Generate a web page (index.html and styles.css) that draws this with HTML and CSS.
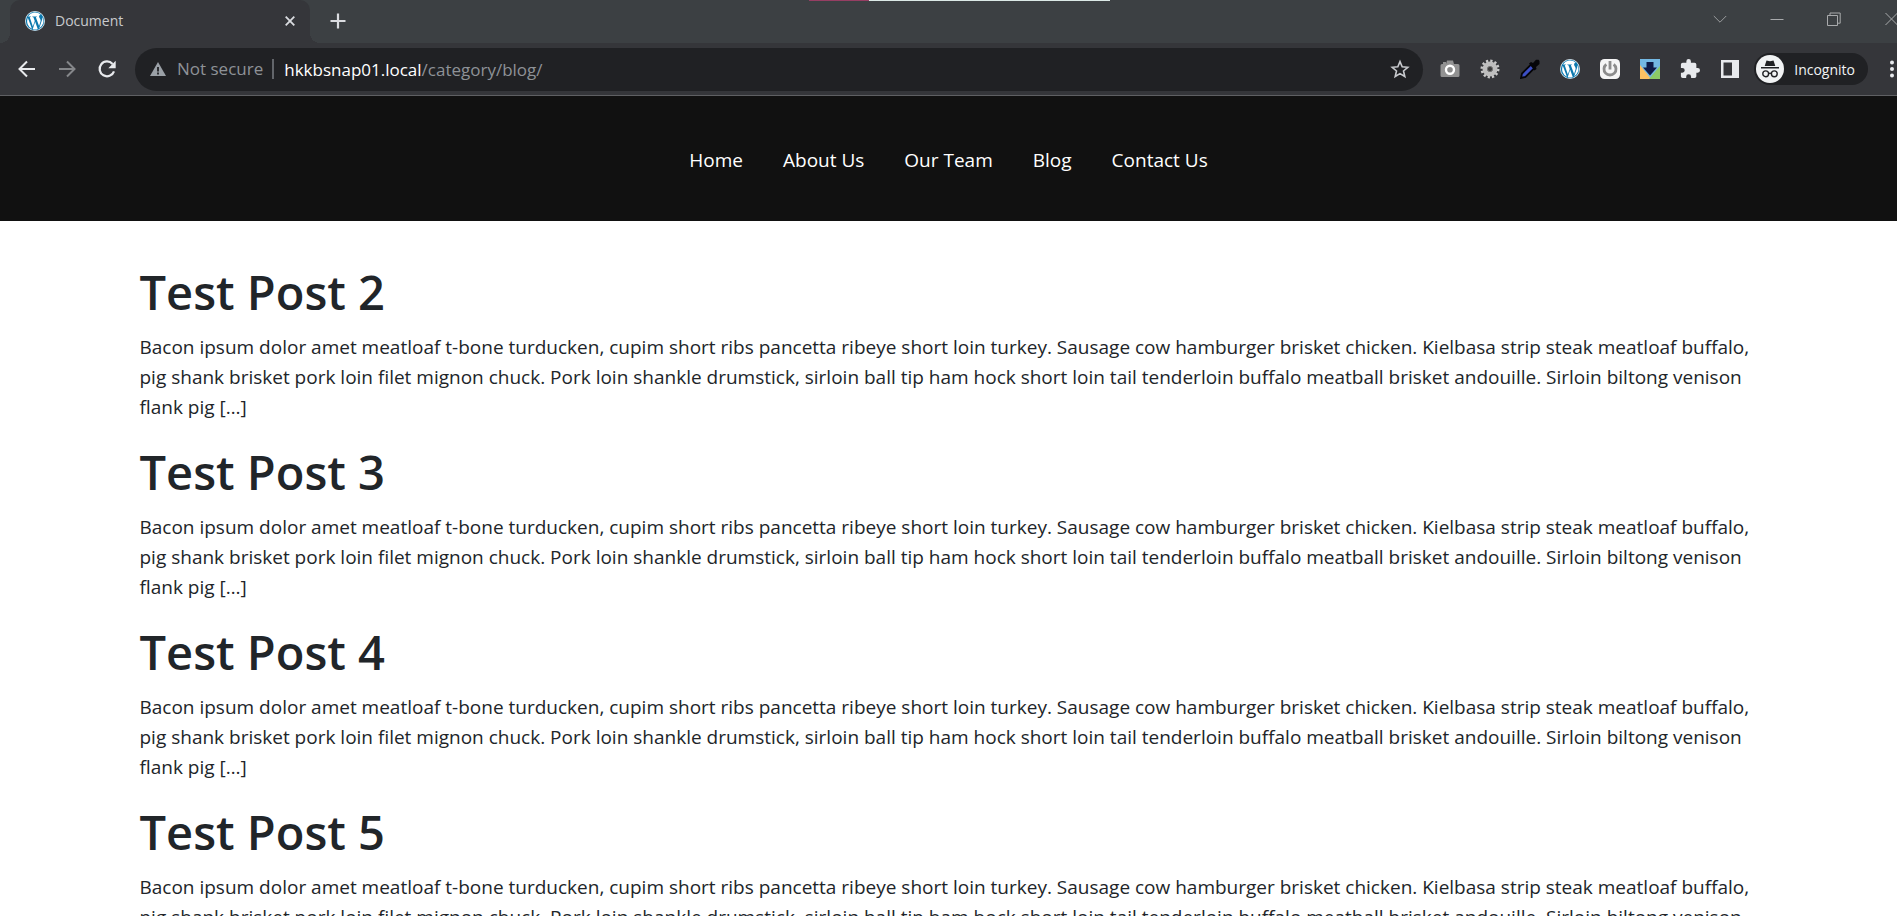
FILE: index.html
```html
<!DOCTYPE html>
<html lang="en">
<head>
<meta charset="utf-8">
<title>Document</title>
<link rel="stylesheet" href="styles.css">
</head>
<body>
<svg class="defs" aria-hidden="true">
  <symbol id="wp" viewBox="0 0 24 24">
    <circle cx="12" cy="12" r="12" fill="#dcecf4"/>
    <circle cx="12" cy="12" r="11" fill="#0b78ae"/>
    <path fill="#fff" d="M3.4 8.2 8.3 21.4A10.2 10.2 0 0 1 3.4 8.2zM12.2 12.8l3.2 9a10.200 10.200 0 0 1-6.200.1zM20.900 7.200A10.200 10.200 0 0 1 17 20.900l3.100-9.100c.6-1.500.9-3 .8-4.600zM3.500 6.500A10.200 10.200 0 0 1 18.900 4.400c-1.300 0-2 1-2 2.200 0 1 .7 1.900 1.300 3 .5.8.7 1.700.4 3l-1.700 5.500L13 7.400l1.200-.2V6.500H8.800v.7l1.300.2 1.600 4.500-2.300 6.800L5.700 7.400 7 7.200v-.7z"/>
  </symbol>
</svg>
<div class="window">
  <div class="tabstrip">
    <span class="capture"><i class="capture-done"></i><i class="capture-rest"></i></span>
    <div class="tab">
      <svg class="i20"><use href="#wp"/></svg>
      <span class="tab-title">Document</span>
      <button class="tab-close" aria-label="Close tab"><svg class="i10" viewBox="0 0 10 10"><path d="M.7.7l8.600 8.600M9.300.7.7 9.300" stroke="#dadce0" stroke-width="1.800"/></svg></button>
    </div>
    <button class="new-tab" aria-label="New tab"><svg class="i16" viewBox="0 0 16 16"><path d="M8 .5v15M.5 8h15" stroke="#dadce0" stroke-width="2.200"/></svg></button>
    <div class="controls">
      <button aria-label="Search tabs"><svg class="i14" viewBox="0 0 14 14"><path d="M.8 4 7 10.200 13.200 4" fill="none" stroke="#9a9c9e"/></svg></button>
      <button aria-label="Minimize"><svg class="i14" viewBox="0 0 14 14"><path d="M.5 7.500h13" stroke="#a8aaac"/></svg></button>
      <button aria-label="Restore"><svg class="i14" viewBox="0 0 14 14"><path d="M.5 3.500h10v10h-10zM3 3V1h10.200v10.200H11" fill="none" stroke="#a8aaac"/></svg></button>
      <button class="win-close" aria-label="Close"><svg class="close-icon" viewBox="0 0 12 14"><path d="M.5 1l12 12M12.500 1l-12 12" stroke="#a8aaac"/></svg></button>
    </div>
  </div>
  <div class="toolbar">
    <div class="history">
      <button aria-label="Back"><svg class="i20" viewBox="0 0 20 20"><path d="M18 10H3M10 2.500 2.500 10l7.500 7.500" fill="none" stroke="#e8eaed" stroke-width="2"/></svg></button>
      <button aria-label="Forward"><svg class="i20" viewBox="0 0 20 20"><path d="M2 10H17M10 2.500l7.500 7.500-7.500 7.500" fill="none" stroke="#85878a" stroke-width="2"/></svg></button>
      <button aria-label="Reload"><svg class="i20" viewBox="0 0 20 20"><path d="M17 12.300A7.400 7.400 0 1 1 15.600 5" fill="none" stroke="#e8eaed" stroke-width="2.200"/><path d="M18.700 1.800v7.400h-7.400z" fill="#e8eaed"/></svg></button>
    </div>
    <div class="omnibox">
      <svg class="i16 warn" viewBox="0 0 16 16"><path d="M8 1l8 14H0z" fill="#9aa0a6"/><path d="M8 6v4.500M8 11.500v2" stroke="#202124" stroke-width="1.800"/></svg>
      <span class="secure">Not secure</span>
      <span class="url"><span class="host">hkkbsnap01.local</span>/category/blog/</span>
      <button class="star" aria-label="Bookmark this page"><svg class="i20" viewBox="0 0 20 20"><path d="M10 2.600l2.200 5.200 5.600.5-4.300 3.700 1.300 5.500L10 14.600l-4.800 2.900L6.500 12 2.200 8.300l5.600-.5z" fill="none" stroke="#c8cace" stroke-width="1.600"/></svg></button>
    </div>
    <div class="extensions">
      <button aria-label="Screenshot"><svg class="i20" viewBox="0 0 20 20"><path d="M3 3h3v2H3zM7 1.500h6l1 3.500h4a1.500 1.500 0 0 1 1.500 1.500v10A1.500 1.500 0 0 1 18 18H2a1.500 1.500 0 0 1-1.500-1.500v-10A1.500 1.500 0 0 1 2 5h4z" fill="#929292"/><circle cx="10" cy="10.800" r="4" fill="#8a8a8a" stroke="#fff" stroke-width="2.400"/></svg></button>
      <button aria-label="Settings extension"><svg class="i20" viewBox="0 0 20 20"><circle cx="10" cy="10" r="8" fill="none" stroke="#c9c9c9" stroke-width="3" stroke-dasharray="2.200 1.990"/><circle cx="10" cy="10" r="5" fill="none" stroke="#bebebe" stroke-width="5"/><circle cx="10" cy="10" r="2.600" fill="#3c3c3c" stroke="#777"/></svg></button>
      <button aria-label="Color picker"><svg class="i20" viewBox="0 0 20 20"><path d="M1 19l1-4.500L11 5.500l3.500 3.500-9 9z" fill="#3c4fc4" stroke="#050508" stroke-width="1.800"/><path d="M9 4.500 11 3l2 1 3-3.200h2.500L19.500 2v3L16 8l.5 2-2 1.500z" fill="#050508"/></svg></button>
      <button aria-label="WordPress"><svg class="i20"><use href="#wp"/></svg></button>
      <button aria-label="Power"><svg class="i20" viewBox="0 0 20 20"><rect width="20" height="20" rx="4.500" fill="#f5f5f5"/><path d="M6.300 5.300a6 6 0 1 0 7.400 0" fill="none" stroke="#8c8c8c" stroke-width="2.800"/><path d="M10 2v8.500" stroke="#8c8c8c" stroke-width="2.800"/></svg></button>
      <button aria-label="Downloader"><svg class="i20" viewBox="0 0 20 20"><path d="M0 0h20v20H0z" fill="#74b9e4"/><path d="M0 6l11 14H0z" fill="#fbc063"/><path d="M20 7v13H9z" fill="#8ccb66"/><path d="M6.500 3h7v5.500H17l-7 8-7-8h3.500z" fill="#101c48"/></svg></button>
      <button aria-label="Extensions"><svg class="i20" viewBox="1 1 22 22"><path d="M20.500 11H19V7a2 2 0 0 0-2-2h-4V3.500a2.500 2.500 0 0 0-5 0V5H4a2 2 0 0 0-2 2v3.800h1.500a2.700 2.700 0 0 1 0 5.400H2V20a2 2 0 0 0 2 2h3.800v-1.500a2.700 2.700 0 0 1 5.400 0V22H17a2 2 0 0 0 2-2v-4h1.500a2.500 2.500 0 0 0 0-5z" fill="#e8eaed"/></svg></button>
      <button aria-label="Side panel"><svg class="i20" viewBox="0 0 20 20"><path d="M1 1h18v18H1zM3.500 3.500v13H12v-13z" fill="#e8eaed" fill-rule="evenodd"/></svg></button>
    </div>
    <button class="profile">
      <svg class="avatar" viewBox="0 0 28 28"><circle cx="14" cy="14" r="14" fill="#f1f3f4"/><path d="M10.500 5.500 14 6.300l3.500-.8L19.300 11H8.700zM5 12h18v1.500H5z" fill="#202124"/><g fill="none" stroke="#202124" stroke-width="1.400"><circle cx="9.700" cy="18.800" r="2.900"/><circle cx="18.300" cy="18.800" r="2.900"/><path d="M12.600 18.600q1.400-1 2.800 0"/></g></svg>
      Incognito
    </button>
    <button class="menu" aria-label="Menu"><svg class="dots" viewBox="0 0 4 18"><g fill="#e8eaed"><circle cx="2" cy="2.500" r="2"/><circle cx="2" cy="9" r="2"/><circle cx="2" cy="15.500" r="2"/></g></svg></button>
  </div>
  <div class="page">
    <header class="site-header">
      <nav class="site-nav">
        <a href="#">Home</a>
        <a href="#">About Us</a>
        <a href="#">Our Team</a>
        <a href="#">Blog</a>
        <a href="#">Contact Us</a>
      </nav>
    </header>
    <main class="container">
      <article class="post">
        <h1>Test Post 2</h1>
        <p>Bacon ipsum dolor amet meatloaf t-bone turducken, cupim short ribs pancetta ribeye short loin turkey. Sausage cow hamburger brisket chicken. Kielbasa strip steak meatloaf buffalo, pig shank brisket pork loin filet mignon chuck. Pork loin shankle drumstick, sirloin ball tip ham hock short loin tail tenderloin buffalo meatball brisket andouille. Sirloin biltong venison flank pig […]</p>
      </article>
      <article class="post">
        <h1>Test Post 3</h1>
        <p>Bacon ipsum dolor amet meatloaf t-bone turducken, cupim short ribs pancetta ribeye short loin turkey. Sausage cow hamburger brisket chicken. Kielbasa strip steak meatloaf buffalo, pig shank brisket pork loin filet mignon chuck. Pork loin shankle drumstick, sirloin ball tip ham hock short loin tail tenderloin buffalo meatball brisket andouille. Sirloin biltong venison flank pig […]</p>
      </article>
      <article class="post">
        <h1>Test Post 4</h1>
        <p>Bacon ipsum dolor amet meatloaf t-bone turducken, cupim short ribs pancetta ribeye short loin turkey. Sausage cow hamburger brisket chicken. Kielbasa strip steak meatloaf buffalo, pig shank brisket pork loin filet mignon chuck. Pork loin shankle drumstick, sirloin ball tip ham hock short loin tail tenderloin buffalo meatball brisket andouille. Sirloin biltong venison flank pig […]</p>
      </article>
      <article class="post">
        <h1>Test Post 5</h1>
        <p>Bacon ipsum dolor amet meatloaf t-bone turducken, cupim short ribs pancetta ribeye short loin turkey. Sausage cow hamburger brisket chicken. Kielbasa strip steak meatloaf buffalo, pig shank brisket pork loin filet mignon chuck. Pork loin shankle drumstick, sirloin ball tip ham hock short loin tail tenderloin buffalo meatball brisket andouille. Sirloin biltong venison flank pig […]</p>
      </article>
    </main>
  </div>
</div>
</body>
</html>
```
FILE: styles.css
```css
* { box-sizing: border-box; }
body { margin: 0; background: #fff; color: #212529; font-family: "Open Sans", "Noto Sans", sans-serif; }
button { display: flex; align-items: center; justify-content: center; padding: 0; border: 0; background: none; font: inherit; color: inherit; }
svg { display: block; flex: none; }
.defs { display: none; }
.i10 { width: 10px; height: 10px; }
.i14 { width: 14px; height: 14px; }
.i16 { width: 16px; height: 16px; }
.i20 { width: 20px; height: 20px; }

.window { display: flex; flex-direction: column; height: 100vh; overflow: hidden; }
.tabstrip { position: relative; display: flex; height: 43px; padding-left: 10px; background: #3c4043; flex: none; }
.capture { position: absolute; top: 0; left: 809px; display: flex; height: 1px; }
.capture-done { width: 60px; background: #963e63; }
.capture-rest { width: 241px; background: #dbe9e6; }
.tab { position: relative; display: flex; align-items: center; width: 300px; padding: 0 15px 2px; gap: 10px; border-radius: 10px 10px 0 0; background: #35363a; color: #c8cacd; font-size: 14px; }
.tab::before, .tab::after { content: ""; position: absolute; bottom: 0; width: 10px; height: 10px; }
.tab::before { left: -10px; background: radial-gradient(circle at 0 0, transparent 10px, #35363a 10px); }
.tab::after { right: -10px; background: radial-gradient(circle at 100% 0, transparent 10px, #35363a 10px); }
.tab-title { flex: 1; }
.new-tab { width: 40px; margin-left: 8px; padding-bottom: 2px; }
.controls { display: flex; height: 37px; margin-left: auto; }
.controls button { width: 57px; }
.controls .win-close { width: 35px; justify-content: flex-end; }
.close-icon { width: 12px; height: 14px; }

.toolbar { display: flex; align-items: center; height: 53px; padding: 0 3px 0 7px; border-bottom: 1px solid #5f6063; background: #35363a; flex: none; }
.history, .extensions { display: flex; }
.history button, .extensions button { width: 40px; height: 40px; }
.history { margin-right: 8px; }
.omnibox { display: flex; align-items: center; flex: 1; height: 43px; padding: 0 13px 0 15px; border-radius: 22px; background: #202124; color: #8e9297; font-size: 17px; }
.secure { margin-left: 11px; padding-right: 9px; border-right: 2px solid #62656a; line-height: 20px; }
.url { flex: 1; margin-left: 10px; }
.host { color: #fff; }
.extensions { margin: 0 4px 0 7px; }
.profile { gap: 10px; height: 32px; padding: 0 13px 0 2px; border-radius: 16px; background: #202124; color: #f1f3f4; font-size: 14px; }
.avatar { width: 28px; height: 28px; }
.menu { margin-left: 22px; }
.dots { width: 4px; height: 18px; }

.page { flex: 1; min-height: 0; overflow: hidden; }
.site-header { display: flex; align-items: center; justify-content: center; height: 125px; padding-top: 2px; background: #111; }
.site-nav { display: flex; gap: 40px; font-size: 19px; line-height: 30px; }
.site-nav a { color: #fff; text-decoration: none; }
.container { max-width: 1650px; margin: 0 auto; padding: 41px 14px 0 16px; }
.post h1 { margin: 0 0 10px; font-size: 47px; font-weight: 600; line-height: 60px; }
.post p { margin: 0 0 20px; font-size: 19px; line-height: 30px; }
```
